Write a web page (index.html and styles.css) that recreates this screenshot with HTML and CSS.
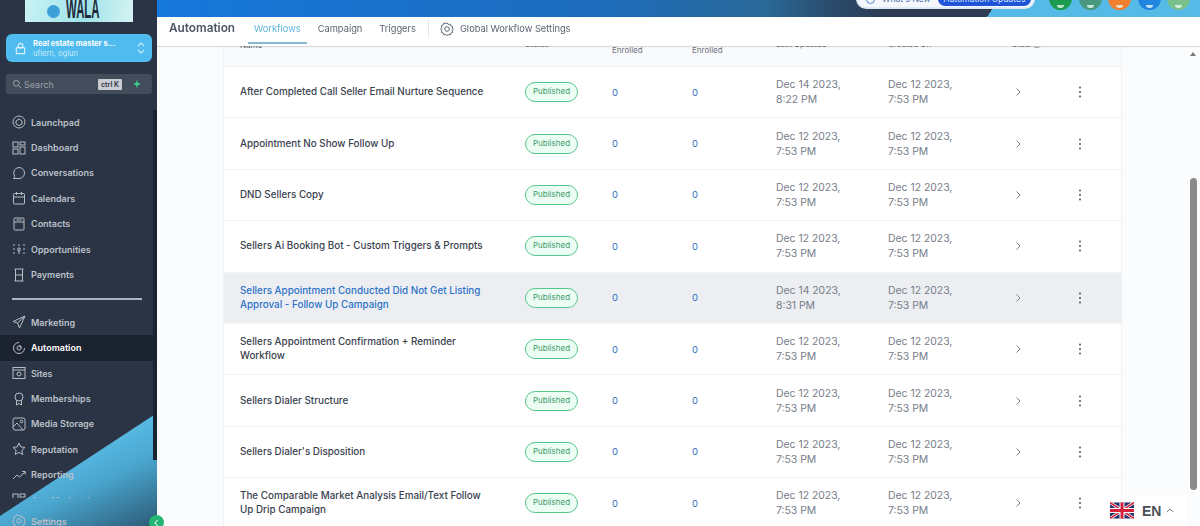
FILE: index.html
```html
<!DOCTYPE html>
<html lang="en">
<head>
<meta charset="utf-8">
<title>Automation - Workflows</title>
<link rel="stylesheet" href="styles.css">
</head>
<body>
<svg class="defs" width="0" height="0" aria-hidden="true">
  <symbol id="i-rocket" viewBox="0 0 14 14"><circle cx="7" cy="7" r="6"/><path d="M7 4l3 2v3l-3 1.5L4 9V6z"/></symbol>
  <symbol id="i-grid" viewBox="0 0 14 14"><rect x="1" y="1" width="5" height="5"/><rect x="8" y="1" width="5" height="3"/><rect x="8" y="6" width="5" height="7"/><rect x="1" y="8" width="5" height="5"/></symbol>
  <symbol id="i-chat" viewBox="0 0 14 14"><path d="M7 1.500a5.500 5.500 0 0 1 0 11H1.500l1.300-2.200A5.500 5.500 0 0 1 7 1.500z"/></symbol>
  <symbol id="i-cal" viewBox="0 0 14 14"><rect x="1.500" y="2.500" width="11" height="10.500" rx="1"/><path d="M1.500 6h11M4.500 1v3M9.500 1v3"/></symbol>
  <symbol id="i-book" viewBox="0 0 14 14"><rect x="2" y="1" width="10" height="12" rx="1"/><path d="M2 5h10M4.500 3h5"/></symbol>
  <symbol id="i-opp" viewBox="0 0 14 14"><path d="M1 3h2M1 7h2M1 11h2M11 3h2M11 7h2M11 11h2M6 3h2M6 6h2v3H6zM7 9v3"/></symbol>
  <symbol id="i-pay" viewBox="0 0 14 14"><path d="M2.500 1h9M2.500 13h9M3.500 1v12M10.500 1v12M3.500 7h7"/></symbol>
  <symbol id="i-send" viewBox="0 0 14 14"><path d="M13 1L1 6.500l4.500 1.500L7.500 13zM13 1L5.500 8"/></symbol>
  <symbol id="i-auto" viewBox="0 0 14 14"><path d="M12.500 7A5.500 5.500 0 1 1 7 1.500"/><circle cx="7" cy="7" r="2" class="solid"/><path d="M7 4.500A2.500 2.500 0 0 1 9.500 7"/></symbol>
  <symbol id="i-site" viewBox="0 0 14 14"><rect x="1" y="1.500" width="12" height="11"/><path d="M1 4h12"/><circle cx="7" cy="8" r="2"/></symbol>
  <symbol id="i-award" viewBox="0 0 14 14"><circle cx="7" cy="5" r="4"/><path d="M4.500 8.500V13L7 11.500 9.500 13V8.500"/></symbol>
  <symbol id="i-media" viewBox="0 0 14 14"><rect x="1" y="1" width="12" height="12" rx="2"/><circle cx="9.500" cy="4.500" r="1.300"/><path d="M1 10l4-4 6 7"/></symbol>
  <symbol id="i-star" viewBox="0 0 14 14"><path d="M7 1l1.800 3.900 4.200.5-3.100 2.900.8 4.200L7 10.400l-3.700 2.100.8-4.200L1 5.400l4.200-.5z"/></symbol>
  <symbol id="i-trend" viewBox="0 0 14 14"><path d="M1 11l4-4 2.500 2L13 4M10 3.500h3.200v3"/></symbol>
  <symbol id="i-gear" viewBox="0 0 14 14"><path d="M7 1l1.300 1.400 1.900-.3.600 1.800 1.800.7-.3 1.900L13.300 7l-1 1.500.3 1.900-1.800.7-.6 1.800-1.900-.3L7 13.500l-1.300-1-1.900.3-.6-1.800-1.800-.7.3-1.900L.7 7l1-1.500-.3-1.900 1.800-.7.6-1.800 1.900.3z"/><circle cx="7" cy="7" r="2.300"/></symbol>
  <symbol id="i-chev" viewBox="0 0 8 10"><path d="M2.500 1.500L6 5 2.500 8.500"/></symbol>
  <symbol id="i-dots" viewBox="0 0 4 12"><circle cx="2" cy="1.500" r="1"/><circle cx="2" cy="6" r="1"/><circle cx="2" cy="10.500" r="1"/></symbol>
</svg>

<div class="app">
  <aside class="sidebar">
    <div class="sidebar-wedge"></div>
    <div class="logo"><span class="logo-dot"></span><span class="logo-text">WALA</span></div>
    <div class="account">
      <svg class="account-icon" viewBox="0 0 14 14"><rect x="2.500" y="6" width="9" height="6.500" rx="1"/><circle cx="7" cy="4" r="2.500"/></svg>
      <div class="account-text"><div class="account-name">Real estate master s...</div><div class="account-sub">ufiern, ogiun</div></div>
      <svg class="account-updown" viewBox="0 0 10 16"><path d="M2 6l3-3 3 3M2 10l3 3 3-3"/></svg>
    </div>
    <div class="search-row">
      <svg class="search-icon" viewBox="0 0 14 14"><circle cx="6" cy="6" r="4"/><path d="M9 9l4 4"/></svg>
      <span class="search-label">Search</span>
      <span class="kbd">ctrl K</span>
      <span class="bolt-wrap"><svg class="bolt" viewBox="0 0 10 12"><path d="M5 0l1 4.500 4 1.500-4 1.500L5 12 4 7.500 0 6l4-1.500z"/></svg></span>
    </div>
    <nav class="nav">
      <a class="nav-item"><svg class="ico"><use href="#i-rocket"/></svg>Launchpad</a>
      <a class="nav-item"><svg class="ico"><use href="#i-grid"/></svg>Dashboard</a>
      <a class="nav-item"><svg class="ico"><use href="#i-chat"/></svg>Conversations</a>
      <a class="nav-item"><svg class="ico"><use href="#i-cal"/></svg>Calendars</a>
      <a class="nav-item"><svg class="ico"><use href="#i-book"/></svg>Contacts</a>
      <a class="nav-item"><svg class="ico"><use href="#i-opp"/></svg>Opportunities</a>
      <a class="nav-item"><svg class="ico"><use href="#i-pay"/></svg>Payments</a>
      <div class="nav-sep"></div>
      <a class="nav-item"><svg class="ico"><use href="#i-send"/></svg>Marketing</a>
      <a class="nav-item active"><svg class="ico"><use href="#i-auto"/></svg>Automation</a>
      <a class="nav-item"><svg class="ico"><use href="#i-site"/></svg>Sites</a>
      <a class="nav-item"><svg class="ico"><use href="#i-award"/></svg>Memberships</a>
      <a class="nav-item"><svg class="ico"><use href="#i-media"/></svg>Media Storage</a>
      <a class="nav-item"><svg class="ico"><use href="#i-star"/></svg>Reputation</a>
      <a class="nav-item"><svg class="ico"><use href="#i-trend"/></svg>Reporting</a>
      <a class="nav-item"><svg class="ico"><use href="#i-grid"/></svg>App Marketplace</a>
    </nav>
    <a class="nav-item settings"><svg class="ico"><use href="#i-gear"/></svg>Settings</a>
    <div class="sidebar-rail"></div>
  </aside>
  <span class="collapse"><svg viewBox="0 0 8 10"><path d="M5.500 1.500L2 5l3.500 3.500"/></svg></span>

  <div class="main">
    <header class="topbar">
      <div class="whatsnew"><span class="wn-icon"></span><span class="wn-label">What's New</span><span class="wn-btn">Automation Updates</span></div>
      <div class="circles">
        <span class="circle c1"><i></i></span><span class="circle c2"><i></i></span><span class="circle c3"><i></i></span><span class="circle c4"><i></i></span><span class="circle c5"><i></i></span>
      </div>
    </header>
    <div class="tabs">
      <h1 class="tabs-title">Automation</h1>
      <a class="tab current">Workflows</a>
      <a class="tab">Campaign</a>
      <a class="tab">Triggers</a>
      <span class="tabs-sep"></span>
      <a class="tab tab-global"><svg class="ico gear"><use href="#i-gear"/></svg>Global Workflow Settings</a>
    </div>
    <div class="content">
      <div class="table">
        <div class="row head">
          <div class="name">Name</div><div>Status</div><div>Total<br>Enrolled</div><div>Active<br>Enrolled</div><div>Last Updated</div><div>Created On</div><div>Stats &#9432;</div><div></div>
        </div>
        <div class="row">
          <div class="name">After Completed Call Seller Email Nurture Sequence</div><div><span class="pill">Published</span></div><div class="num">0</div><div class="num">0</div><div class="date">Dec 14 2023,<br>8:22 PM</div><div class="date">Dec 12 2023,<br>7:53 PM</div><div><svg class="chev"><use href="#i-chev"/></svg></div><div><svg class="dots"><use href="#i-dots"/></svg></div>
        </div>
        <div class="row">
          <div class="name">Appointment No Show Follow Up</div><div><span class="pill">Published</span></div><div class="num">0</div><div class="num">0</div><div class="date">Dec 12 2023,<br>7:53 PM</div><div class="date">Dec 12 2023,<br>7:53 PM</div><div><svg class="chev"><use href="#i-chev"/></svg></div><div><svg class="dots"><use href="#i-dots"/></svg></div>
        </div>
        <div class="row">
          <div class="name">DND Sellers Copy</div><div><span class="pill">Published</span></div><div class="num">0</div><div class="num">0</div><div class="date">Dec 12 2023,<br>7:53 PM</div><div class="date">Dec 12 2023,<br>7:53 PM</div><div><svg class="chev"><use href="#i-chev"/></svg></div><div><svg class="dots"><use href="#i-dots"/></svg></div>
        </div>
        <div class="row">
          <div class="name">Sellers Ai Booking Bot - Custom Triggers &amp; Prompts</div><div><span class="pill">Published</span></div><div class="num">0</div><div class="num">0</div><div class="date">Dec 12 2023,<br>7:53 PM</div><div class="date">Dec 12 2023,<br>7:53 PM</div><div><svg class="chev"><use href="#i-chev"/></svg></div><div><svg class="dots"><use href="#i-dots"/></svg></div>
        </div>
        <div class="row hover">
          <div class="name">Sellers Appointment Conducted Did Not Get Listing Approval - Follow Up Campaign</div><div><span class="pill">Published</span></div><div class="num">0</div><div class="num">0</div><div class="date">Dec 14 2023,<br>8:31 PM</div><div class="date">Dec 12 2023,<br>7:53 PM</div><div><svg class="chev"><use href="#i-chev"/></svg></div><div><svg class="dots"><use href="#i-dots"/></svg></div>
        </div>
        <div class="row">
          <div class="name">Sellers Appointment Confirmation + Reminder Workflow</div><div><span class="pill">Published</span></div><div class="num">0</div><div class="num">0</div><div class="date">Dec 12 2023,<br>7:53 PM</div><div class="date">Dec 12 2023,<br>7:53 PM</div><div><svg class="chev"><use href="#i-chev"/></svg></div><div><svg class="dots"><use href="#i-dots"/></svg></div>
        </div>
        <div class="row">
          <div class="name">Sellers Dialer Structure</div><div><span class="pill">Published</span></div><div class="num">0</div><div class="num">0</div><div class="date">Dec 12 2023,<br>7:53 PM</div><div class="date">Dec 12 2023,<br>7:53 PM</div><div><svg class="chev"><use href="#i-chev"/></svg></div><div><svg class="dots"><use href="#i-dots"/></svg></div>
        </div>
        <div class="row">
          <div class="name">Sellers Dialer's Disposition</div><div><span class="pill">Published</span></div><div class="num">0</div><div class="num">0</div><div class="date">Dec 12 2023,<br>7:53 PM</div><div class="date">Dec 12 2023,<br>7:53 PM</div><div><svg class="chev"><use href="#i-chev"/></svg></div><div><svg class="dots"><use href="#i-dots"/></svg></div>
        </div>
        <div class="row">
          <div class="name">The Comparable Market Analysis Email/Text Follow Up Drip Campaign</div><div><span class="pill">Published</span></div><div class="num">0</div><div class="num">0</div><div class="date">Dec 12 2023,<br>7:53 PM</div><div class="date">Dec 12 2023,<br>7:53 PM</div><div><svg class="chev"><use href="#i-chev"/></svg></div><div><svg class="dots"><use href="#i-dots"/></svg></div>
        </div>
      </div>
      <div class="scrollbar"><span class="sb-arrow"></span><span class="sb-thumb"></span></div>
      <div class="lang">
        <svg class="flag" viewBox="0 0 24 16"><rect width="24" height="16" rx="2" fill="#27336b"/><path d="M0 0l24 16M24 0L0 16" stroke="#fff" stroke-width="3"/><path d="M0 0l24 16M24 0L0 16" stroke="#d3223a" stroke-width="1.500"/><path d="M12 0v16M0 8h24" stroke="#fff" stroke-width="5"/><path d="M12 0v16M0 8h24" stroke="#d3223a" stroke-width="3"/></svg>
        <span class="lang-code">EN</span>
        <svg class="lang-caret" viewBox="0 0 10 6"><path d="M1 5l4-4 4 4"/></svg>
      </div>
    </div>
  </div>
</div>
</body>
</html>
```

FILE: styles.css
```css
* { box-sizing: border-box; }
html, body { margin: 0; height: 100%; overflow: hidden; background: #fff; }
body { font-family: Inter, "Noto Sans", sans-serif; }
.defs { position: absolute; }
.app { display: flex; height: 526px; position: relative; filter: blur(0.5px); }

/* sidebar */
.sidebar { width: 157px; flex: none; position: relative; background: #2b3445; display: flex; flex-direction: column; overflow: hidden; }
.sidebar-wedge { position: absolute; inset: 0; background: linear-gradient(155deg, #5ec4ee 78%, #4aa6cf 88%, #2c5a76 100%); clip-path: polygon(157px 413px, 157px 526px, 0 526px, 0 516px); }
.sidebar-rail { position: absolute; right: 0; top: 110px; width: 4px; height: 350px; background: #1b2230; }
.logo { position: relative; margin: 0 24px 0 25px; height: 22px; background: linear-gradient(100deg, #c9f2f4, #9fe3ea 55%, #d6f3f2); display: flex; align-items: center; justify-content: center; gap: 4px; overflow: hidden; flex: none; }
.logo-dot { width: 13px; height: 13px; border-radius: 50%; background: #3da0d8; }
.logo-text { font: 700 27px/1 "Liberation Sans", sans-serif; color: #1d2a3a; transform: scaleX(.42); margin: -3px -12px 0 -21px; }
.account { position: relative; flex: none; margin: 12px 5px 0 6px; height: 28px; border-radius: 6px; background: #4fbbee; display: flex; align-items: center; padding: 0 6px 0 8px; color: #fff; }
.account-icon { width: 13px; height: 13px; fill: none; stroke: #d8f1fc; stroke-width: 1.300; flex: none; }
.account-text { margin-left: 6px; flex: 1; min-width: 0; }
.account-name { font-size: 7.600px; font-weight: 700; line-height: 11px; white-space: nowrap; }
.account-sub { font-size: 7.500px; line-height: 10px; color: #c9ecfb; }
.account-updown { width: 10px; height: 16px; fill: none; stroke: #bfe8fa; stroke-width: 1.300; flex: none; }
.search-row { position: relative; flex: none; margin: 12px 5px 0 6px; height: 20px; border-radius: 3px; background: #434c5b; display: flex; align-items: center; padding-left: 6px; }
.search-icon { width: 10px; height: 10px; fill: none; stroke: #a4a9b2; stroke-width: 1.300; flex: none; }
.search-label { font-size: 9px; color: #9aa0aa; margin-left: 2px; flex: 1; }
.kbd { background: #c9ccd2; color: #2b3445; font-size: 7px; font-weight: 600; line-height: 11px; padding: 0 3px; border-radius: 1px; }
.bolt-wrap { width: 30px; display: flex; justify-content: center; flex: none; }
.bolt { width: 8px; height: 10px; fill: #3ecf8e; }
.nav { position: relative; flex: none; margin-top: 15.500px; height: 388px; overflow: hidden; }
.nav-item { display: flex; align-items: center; height: 25.400px; padding-left: 12px; gap: 5px; font-size: 9px; font-weight: 600; color: #bcc1c9; white-space: nowrap; }
.nav-item.active { background: #1b2230; color: #fff; }
.ico { width: 14px; height: 14px; fill: none; stroke: #b7bcc5; stroke-width: 1; flex: none; }
.ico .solid { fill: #fff; }
.nav-sep { height: 2px; background: #aeb4bf; margin: 10.500px 15px 10px 12px; }
.settings { position: relative; flex: none; margin-top: 11px; }
.collapse { position: absolute; left: 149px; top: 515px; width: 15px; height: 15px; border-radius: 50%; background: #22b573; display: flex; align-items: center; justify-content: center; z-index: 3; }
.collapse svg { width: 7px; height: 8px; fill: none; stroke: #d9f5e7; stroke-width: 1.300; }

/* main column */
.main { flex: 1; min-width: 0; display: flex; flex-direction: column; background: #fbfcfd; }
.topbar { height: 17px; flex: none; position: relative; overflow: hidden; display: flex; justify-content: flex-end; align-items: flex-end; padding: 0 10px 7px 0;
  background: linear-gradient(125deg, transparent 79.800%, #55bbe6 79.800%), linear-gradient(90deg, #1678db 0%, #1d6cbd 42%, #2a6a9a 58%, #2a4a6a 65%, #2c3b52 70%); }
.whatsnew { position: absolute; left: 699px; bottom: 8px; width: 179px; height: 20px; background: #f4f8fc; border-radius: 10px; border: 2px solid #dfe9f3; display: flex; align-items: center; padding-left: 8px; gap: 7px; }
.wn-icon { width: 9px; height: 9px; border-radius: 50%; border: 1.500px solid #5a83c9; flex: none; }
.wn-label { font-size: 8.500px; color: #4e6ea6; white-space: nowrap; }
.wn-btn { background: #1f54d6; color: #dbe6ff; font-size: 8.500px; line-height: 14px; padding: 0 6px; border-radius: 8px; white-space: nowrap; }
.circles { display: flex; gap: 6.500px; }
.circle { width: 23px; height: 23px; border-radius: 50%; display: flex; align-items: flex-end; justify-content: center; padding-bottom: 2px; flex: none; }
.circle i { width: 7px; height: 3px; border-radius: 0 0 4px 4px; background: #e9f7ee; opacity: .8; }
.c1 { background: #1a9b50; } .c2 { background: #4a9880; } .c3 { background: #f08030; } .c4 { background: #2185e0; } .c5 { background: #79c08a; }

.tabs { height: 29px; flex: none; position: relative; z-index: 2; background: #fff; box-shadow: 0 1px 1px rgba(0,0,0,.13); display: flex; align-items: center; padding-left: 12px; }
.tabs-title { margin: 0 19px 7px 0; font-size: 11.800px; font-weight: 600; color: #4b5563; }
.tab { position: relative; font-size: 9.300px; color: #5b6472; margin-right: 17px; height: 100%; padding-bottom: 6px; display: flex; align-items: center; white-space: nowrap; }
.tab.current { color: #5fb2da; }
.tab.current::after { content: ""; position: absolute; left: -6px; right: -6px; bottom: 2px; height: 2px; background: #86b8cf; }
.tabs-sep { width: 1px; height: 19px; background: #e5e7eb; margin: 0 11px 6px -5px; }
.gear { stroke: #5b6472; margin-right: 6px; }

.content { flex: 1; min-height: 0; position: relative; overflow: hidden; padding-left: 66px; }
.table { width: 899px; margin-top: -19px; background: #fff; border-left: 1px solid #f0f1f3; border-right: 1px solid #f0f1f3; }
.row { display: grid; grid-template-columns: 285px 87px 80px 84px 112px 124px 62px 1fr; padding-left: 16px; height: 51.400px; align-items: center; border-bottom: 1px solid #f2f3f5; font-size: 10px; color: #374151; }
.row .name { max-width: 252px; line-height: 14px; font-size: 9.850px; font-weight: 500; color: #3a424f; padding-bottom: 2px; }
.row.head { height: 40px; padding-bottom: 4px; background: #f9fafb; border-bottom: 1px solid #eceef1; font-size: 8px; color: #6b7280; line-height: 11px; }
.row.head .name { font-size: 8px; color: #6b7280; padding-bottom: 0; }
.row.hover { background: #eceef1; }
.row.hover .name { color: #2c73c9; }
.pill { display: inline-block; width: 53px; height: 20px; line-height: 17px; text-align: center; border: 1px solid #58c78f; border-radius: 10px; background: #ecfdf3; color: #3e9a6b; font-size: 8px; }
.num { color: #2e6fc0; font-size: 9.500px; }
.date { color: #767d89; font-size: 10.400px; line-height: 15px; white-space: nowrap; }
.chev { display: block; width: 8px; height: 10px; margin-left: 2px; fill: none; stroke: #7a818c; stroke-width: 1; }
.dots { display: block; width: 4px; height: 12px; fill: #4b5563; margin-left: 4px; }

.scrollbar { position: absolute; right: 0; top: 0; bottom: 0; width: 13px; }
.sb-arrow { position: absolute; left: 3px; top: 6px; border: 3.500px solid transparent; border-top: 0; border-bottom: 4px solid #777; }
.sb-thumb { position: absolute; left: 3px; right: 3px; top: 132px; height: 312px; background: #8a8a8a; border-radius: 4px; }
.lang { position: absolute; left: 943px; bottom: 0; width: 86px; height: 31px; background: #fff; display: flex; align-items: center; padding-left: 10px; }
.flag { width: 24px; height: 17px; flex: none; }
.lang-code { font: 700 14px/1 "Liberation Sans", sans-serif; color: #4b4f56; margin-left: 8px; }
.lang-caret { width: 8px; height: 5px; fill: none; stroke: #777; stroke-width: 1.200; margin-left: 5px; }
```
